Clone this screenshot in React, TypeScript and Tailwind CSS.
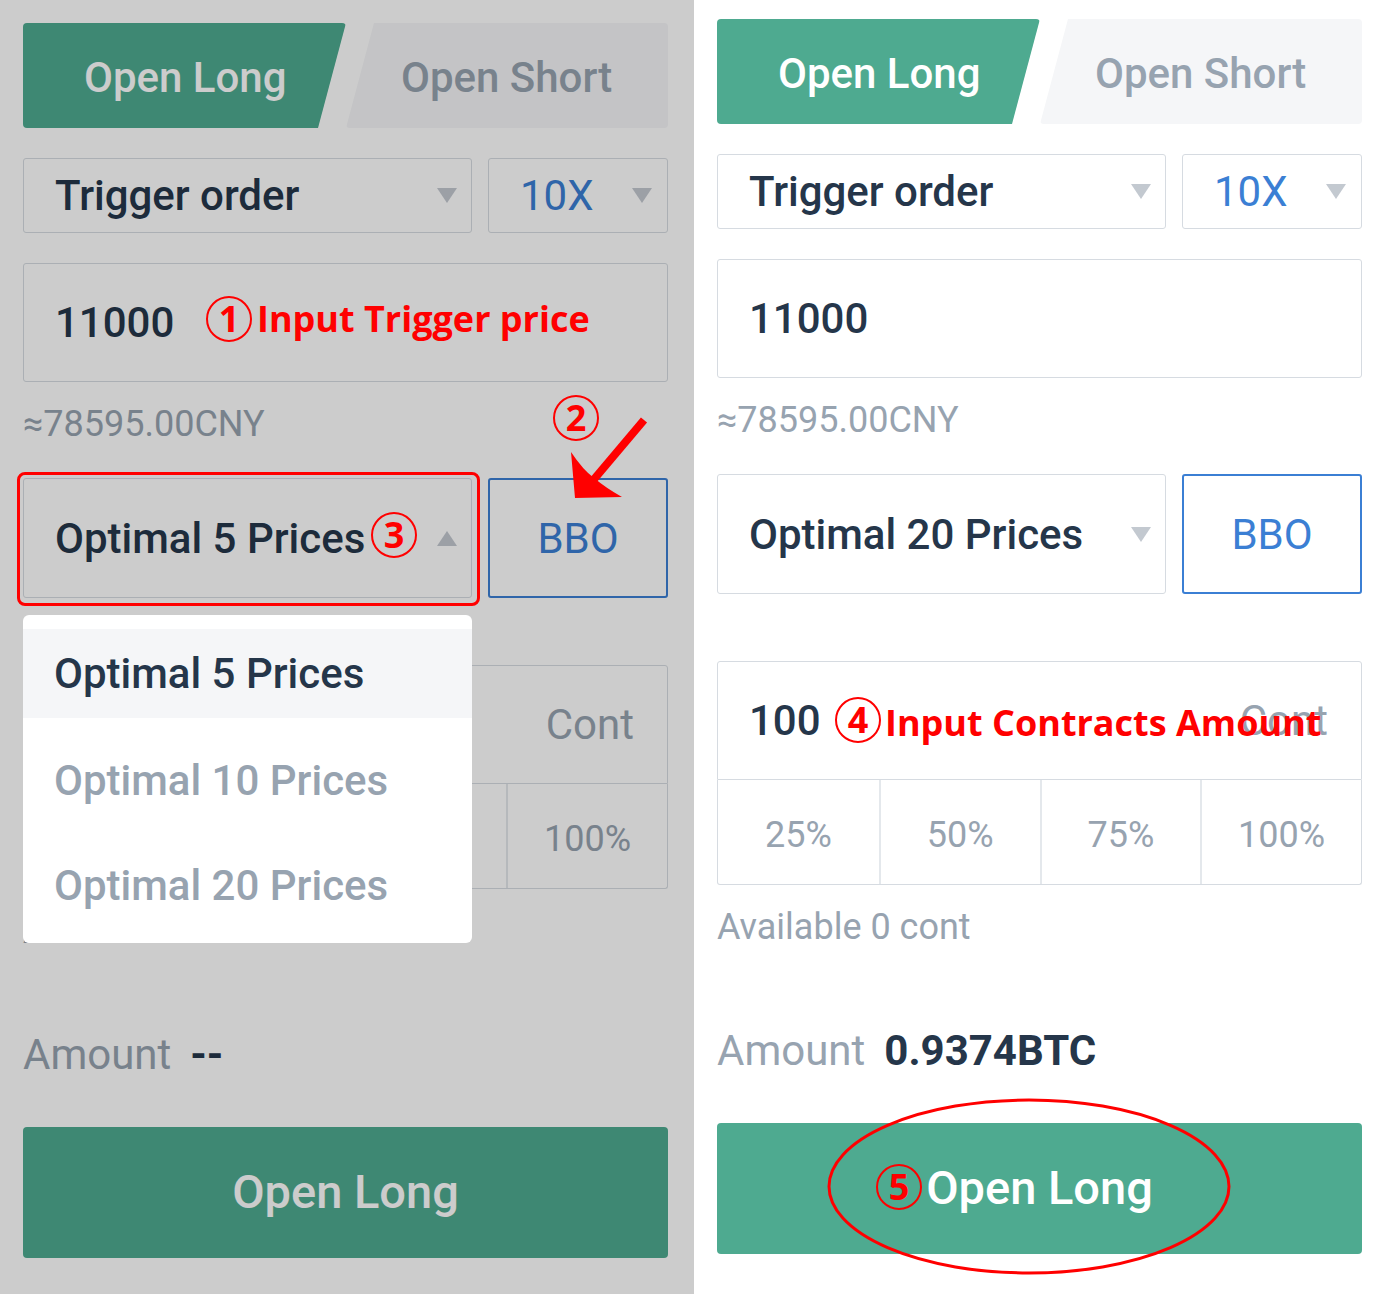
import type { ReactNode } from "react"

const NAVY = "text-[#25364a]"
const GRAY = "text-[#97a3b0]"

function Tri({ up }: { up?: boolean }) {
  return (
    <svg width="20" height="15" viewBox="0 0 20 15" className="shrink-0 text-[#c3c9d0]">
      <polygon points={up ? "10,0 20,15 0,15" : "0,0 20,0 10,15"} fill="currentColor" />
    </svg>
  )
}

function Tabs() {
  return (
    <div className="flex h-[105px]">
      <div className="w-[323px] rounded-[4px] bg-[#4eaa90] [clip-path:polygon(0_0,100%_0,calc(100%-28px)_100%,0_100%)] flex items-center pl-[61px] pt-[4px] text-[42px] font-medium text-white">
        Open Long
      </div>
      <div className="flex-1 rounded-[4px] bg-[#f5f6f8] [clip-path:polygon(28px_0,100%_0,100%_100%,0_100%)] flex items-center pl-[55px] pt-[4px] text-[42px] font-medium text-[#97a3b0]">
        Open Short
      </div>
    </div>
  )
}

type FormProps = {
  priceType: string
  up?: boolean
  cont: string
  amount: string
}

function TradeForm({ priceType, up, cont, amount }: FormProps) {
  return (
    <div className="w-[645px]">
      <Tabs />

      {/* order type + leverage */}
      <div className="mt-[30px] flex gap-[16px]">
        <div className="w-[449px] h-[75px] rounded-[3px] border border-[#d6dbe1] flex items-center pl-[31px] pr-[14px]">
          <span className={`flex-1 text-[42px] font-medium ${NAVY}`}>Trigger order</span>
          <Tri />
        </div>
        <div className="flex-1 h-[75px] rounded-[3px] border border-[#d6dbe1] flex items-center pl-[31px] pr-[15px]">
          <span className="flex-1 text-[42px] text-[#3b7fd4]">10X</span>
          <Tri />
        </div>
      </div>

      <div className={`mt-[30px] h-[119px] rounded-[3px] border border-[#d6dbe1] flex items-center pl-[31px] text-[42px] font-medium ${NAVY}`}>
        11000
      </div>
      <div className={`h-[96px] pt-[24px] text-[36px] leading-[36px] ${GRAY}`}>≈78595.00CNY</div>

      <div className="flex gap-[16px] h-[120px]">
        <div className="w-[449px] rounded-[3px] border border-[#d6dbe1] flex items-center pl-[31px] pr-[14px]">
          <span className={`flex-1 text-[42px] font-medium ${NAVY}`}>{priceType}</span>
          <Tri up={up} />
        </div>
        <div className="flex-1 rounded-[3px] border-2 border-[#3b7fd4] flex items-center justify-center text-[42px] text-[#3b7fd4]">
          BBO
        </div>
      </div>

      {/* contracts */}
      <div className="mt-[67px] h-[119px] rounded-t-[3px] border border-[#d6dbe1] flex items-center pl-[31px] pr-[33px]">
        <span className={`flex-1 text-[42px] font-medium ${NAVY}`}>{cont}</span>
        <span className={`text-[42px] ${GRAY}`}>Cont</span>
      </div>
      <div className="grid grid-cols-4 h-[105px] rounded-b-[3px] border border-t-0 border-[#d6dbe1]">
        {["25%", "50%", "75%", "100%"].map((p, i) => (
          <div
            key={p}
            className={`flex items-center justify-center pt-[6px] text-[36px] ${GRAY} ${i > 0 ? "border-l-2 border-[#e4e8ec]" : ""}`}
          >
            {p}
          </div>
        ))}
      </div>
      <div className={`pt-[24px] text-[36px] leading-[36px] ${GRAY}`}>Available 0 cont</div>

      <div className="mt-[85px] h-[42px] flex items-center gap-[19px] text-[42px] leading-[42px]">
        <span className={GRAY}>Amount</span>
        <span className={`font-bold ${NAVY}`}>{amount}</span>
      </div>

      <div className="mt-[51px] h-[131px] rounded-[4px] bg-[#4eaa90] flex items-center justify-center text-[47px] font-medium text-white">
        Open Long
      </div>
    </div>
  )
}

function Circled({ n, className }: { n: number; className: string }) {
  return (
    <div
      className={`absolute z-30 w-[46px] h-[46px] rounded-full border-2 border-[#ff0000] flex items-center justify-center font-['Open_Sans',sans-serif] font-bold text-[36px] leading-none text-[#ff0000] ${className}`}
    >
      {n}
    </div>
  )
}

function Note({ children, className }: { children: ReactNode; className: string }) {
  return (
    <div
      className={`absolute z-30 whitespace-nowrap font-['Open_Sans',sans-serif] font-bold text-[36px] leading-[36px] text-[#ff0000] ${className}`}
    >
      {children}
    </div>
  )
}

export default function App() {
  return (
    <div className="flex h-[1294px] w-[1391px] overflow-hidden font-['Roboto',sans-serif]">
      {/* left: dimmed with open dropdown */}
      <div className="relative w-[694px] shrink-0 bg-white">
        <div className="pl-[23px] pt-[23px]">
          <TradeForm priceType="Optimal 5 Prices" up cont="" amount="--" />
        </div>
        <div className="absolute inset-0 z-10 bg-black/20" />

        <div className="absolute z-20 left-[23px] top-[615px] w-[449px] h-[328px] rounded-[6px] bg-white pt-[14px]">
          <div className={`h-[89px] bg-[#f5f6f8] flex items-center pl-[31px] text-[42px] font-medium ${NAVY}`}>
            Optimal 5 Prices
          </div>
          <div className="mt-[10px]">
            {["Optimal 10 Prices", "Optimal 20 Prices"].map((t) => (
              <div key={t} className={`h-[105px] flex items-center pl-[31px] text-[42px] font-medium ${GRAY}`}>
                {t}
              </div>
            ))}
          </div>
        </div>

        {/* annotations */}
        <div className="absolute z-30 left-[17px] top-[472px] w-[463px] h-[134px] rounded-[8px] border-[3px] border-[#ff0000]" />
        <Circled n={1} className="left-[206px] top-[296px]" />
        <Note className="left-[257px] top-[301px]">Input Trigger price</Note>
        <Circled n={2} className="left-[553px] top-[395px]" />
        <Circled n={3} className="left-[371px] top-[512px]" />
        <svg className="absolute z-30 left-0 top-0" width="694" height="620" viewBox="0 0 694 620">
          <line x1="644" y1="420" x2="590" y2="484" stroke="#ff0000" strokeWidth="8" />
          <path d="M575 498 L571 452 Q583 470 594 478 Q606 488 622 497 Z" fill="#ff0000" />
        </svg>
      </div>

      {/* right: filled form */}
      <div className="relative flex-1 bg-white">
        <div className="pl-[23px] pt-[19px]">
          <TradeForm priceType="Optimal 20 Prices" cont="100" amount="0.9374BTC" />
        </div>
        <Circled n={4} className="left-[141px] top-[697px]" />
        <Note className="left-[191px] top-[705px]">Input Contracts Amount</Note>
        <Circled n={5} className="left-[182px] top-[1164px]" />
        <svg className="absolute z-30 left-[132px] top-[1097px]" width="406" height="180" viewBox="0 0 406 180">
          <ellipse cx="203" cy="89.5" rx="200" ry="86.5" fill="none" stroke="#ff0000" strokeWidth="3" />
        </svg>
      </div>
    </div>
  )
}
